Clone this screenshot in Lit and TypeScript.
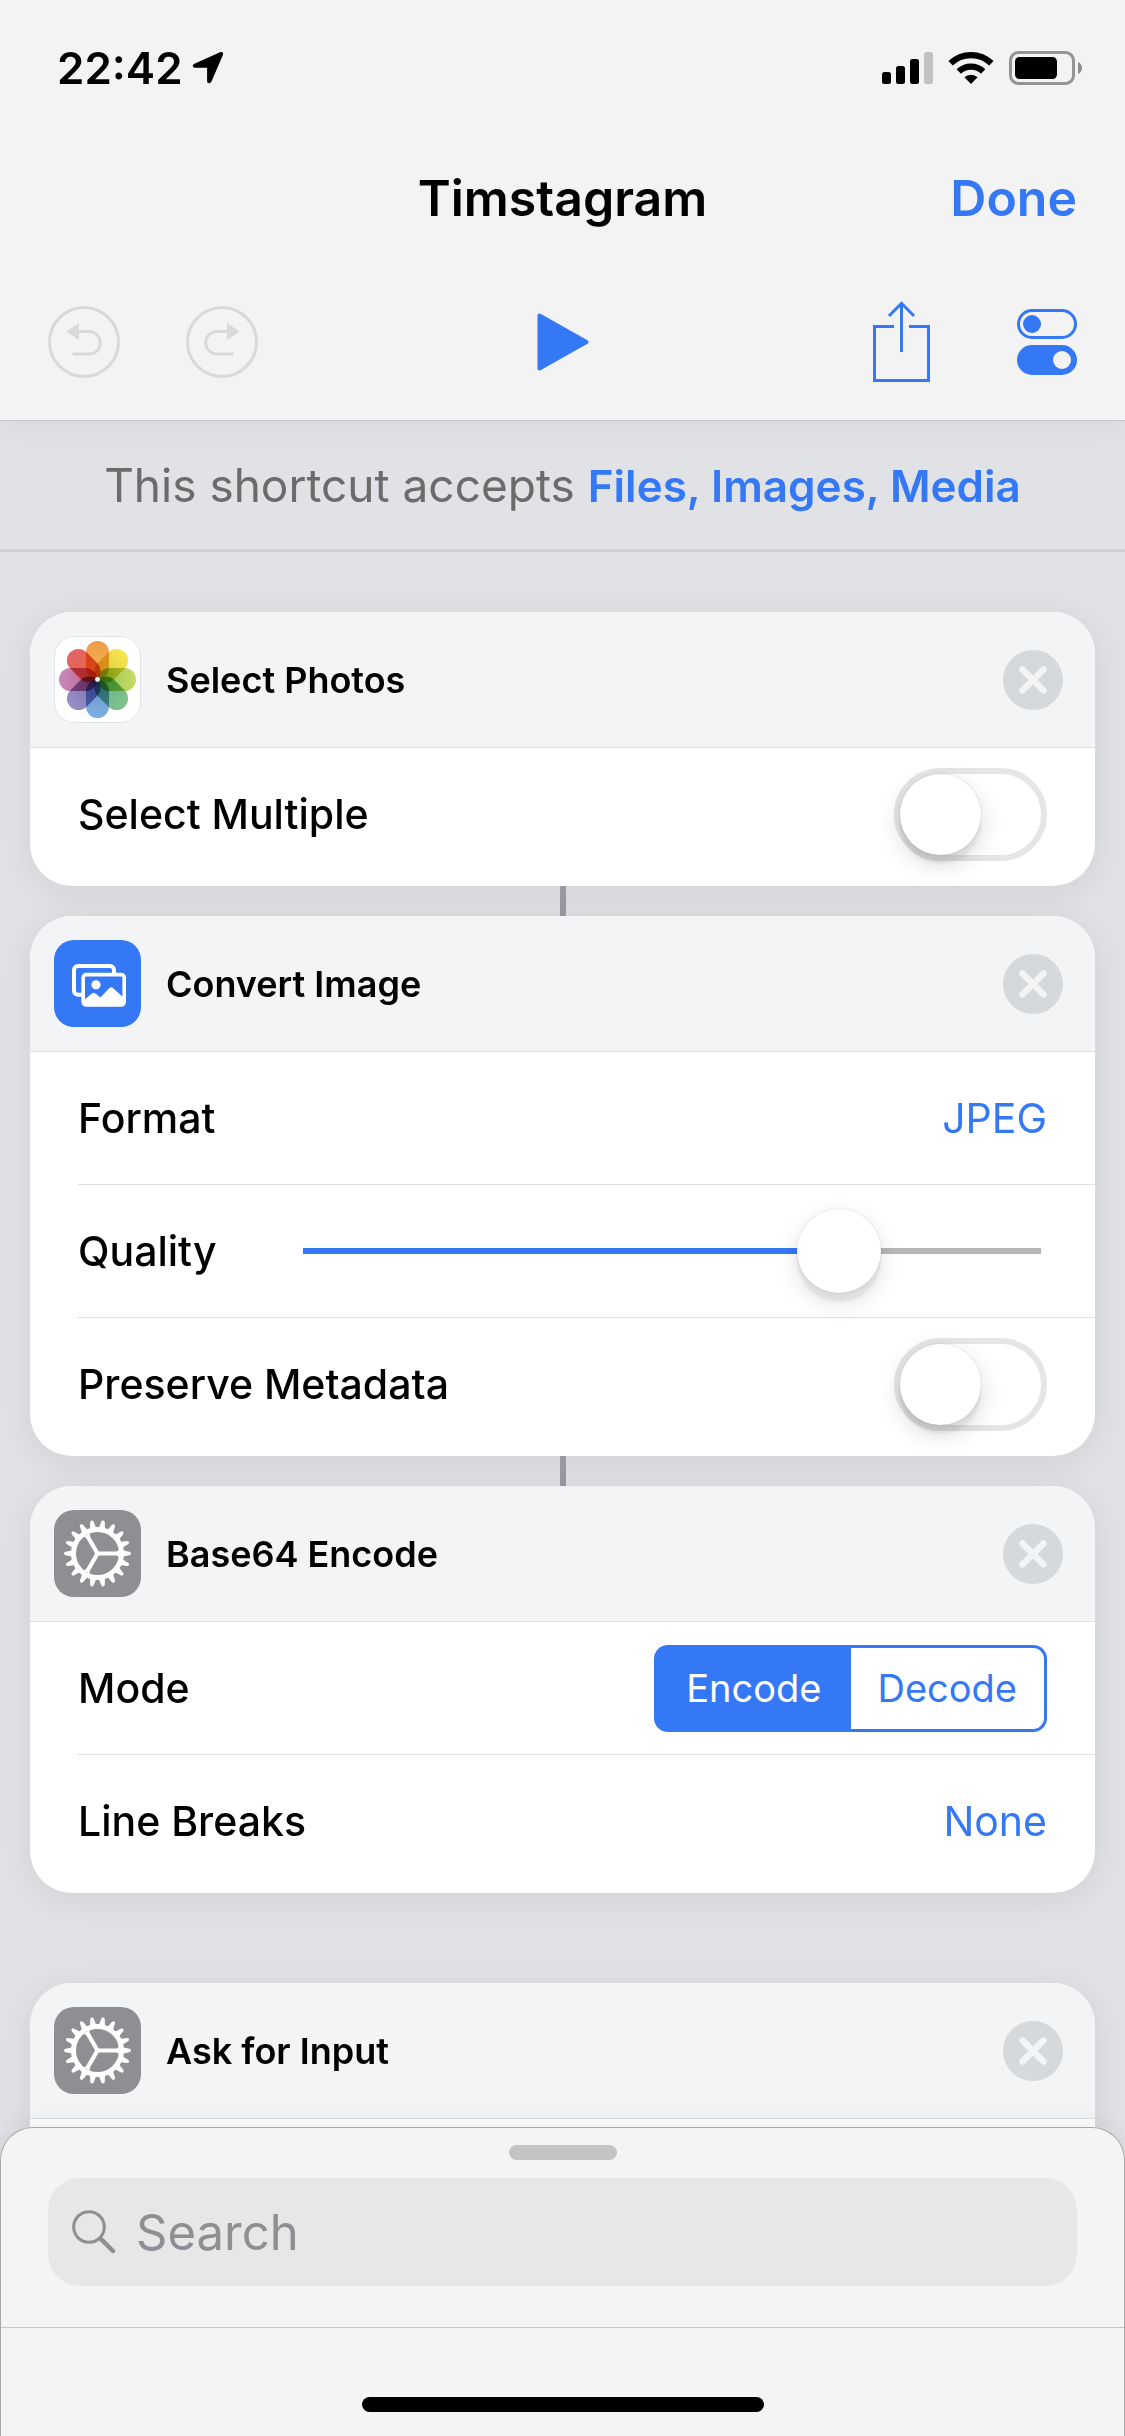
import { LitElement, html, css, svg, nothing, TemplateResult } from "lit";
import { customElement, property } from "lit/decorators.js";

const photosIcon = () => {
  const petals = [
    ["#ee9b4c", "#f2bd52"],
    ["#f9e64c", "#d3c545"],
    ["#c9db62", "#8fc455"],
    ["#80c389", "#66b096"],
    ["#7cb1e0", "#6c93c8"],
    ["#9890c6", "#8270b2"],
    ["#c68bbb", "#c25f86"],
    ["#e2646a", "#e8653c"],
  ];
  return html`<svg class="art" viewBox="0 0 87 87" aria-hidden="true">
    <defs>
      ${petals.map(
        ([outer, inner], i) => svg`<linearGradient id="petal${i}" x1="0" y1="0" x2="0" y2="1">
          <stop offset="0" stop-color=${outer} /><stop offset="1" stop-color=${inner} />
        </linearGradient>`
      )}
    </defs>
    <rect x="0.5" y="0.5" width="86" height="86" rx="20" fill="#fff" stroke="#e2e3e5" />
    ${petals.map(
      (_, i) => svg`<rect class="petal" x="32" y="5" width="23" height="38" rx="11.5"
        fill="url(#petal${i})" transform="rotate(${i * 45} 43.5 43.5)" />`
    )}
    <circle cx="43.5" cy="43.5" r="2.4" fill="#fff" />
  </svg>`;
};

const imageIcon = () => html`<svg class="art" viewBox="0 0 87 87" aria-hidden="true">
  <rect width="87" height="87" rx="20" fill="#3478f6" />
  <path d="M29 54.7H24a4 4 0 0 1-4-4V30a4 4 0 0 1 4-4h32a4 4 0 0 1 4 4v4" fill="none" stroke="#fff" stroke-width="4" />
  <rect x="29.2" y="34.6" width="41" height="30.4" rx="3" fill="#3478f6" stroke="#fff" stroke-width="3.6" />
  <circle cx="42" cy="44.8" r="4.6" fill="#fff" />
  <path d="M30 60L38 53.4q1.800-1.400 3.400 0L46.400 57.400 55.500 48q1.700-1.500 3.400 0L69.500 57.500V65H30z" fill="#fff" />
</svg>`;

const gearIcon = () => html`<svg class="art" viewBox="0 0 87 87" aria-hidden="true">
  <rect width="87" height="87" rx="20" fill="#8e8e93" />
  ${Array.from(
    { length: 18 },
    (_, i) => svg`<path d="M67 40L75.300 41.700q1.700 .300 1.700 1.800t-1.700 1.800L67 47z" fill="#fff"
      transform="rotate(${i * 20} 43.5 43.5)" />`
  )}
  <circle cx="43.5" cy="43.5" r="24" fill="none" stroke="#fff" stroke-width="5" />
  ${[0, 120, 240].map(
    (a) => svg`<path d="M43.500 41.400H62q2.500 0 3-2.500V48q-.5-2.400-3-2.400H43.500z" fill="#fff"
      transform="rotate(${a} 43.5 43.5)" />`
  )}
</svg>`;

const icons: Record<string, () => TemplateResult> = {
  photos: photosIcon,
  image: imageIcon,
  gear: gearIcon,
};

@customElement("action-card")
class ActionCard extends LitElement {
  @property() heading = "";
  @property() icon = "gear";

  static styles = css`
    :host {
      display: block;
      border-radius: 42px;
      background: #fff;
      box-shadow: 0 6px 36px rgba(0, 0, 0, 0.08);
      padding-bottom: 6px;
    }
    .head {
      display: flex;
      align-items: center;
      gap: 25px;
      padding: 24px 32px 24px 24px;
      background: #f3f4f6;
      border-bottom: 1px solid #dfe0e2;
      border-radius: 42px 42px 0 0;
    }
    .art {
      display: block;
      width: 87px;
      height: 87px;
    }
    .petal {
      mix-blend-mode: multiply;
    }
    .title {
      flex: 1;
      margin: 0;
      font-size: 36px;
      line-height: 44px;
      font-weight: 600;
    }
    .close {
      appearance: none;
      border: 0;
      padding: 0;
      background: none;
      border-radius: 50%;
    }
    .close svg {
      display: block;
      width: 60px;
      height: 60px;
    }
  `;

  render() {
    return html`
      <header class="head">
        ${icons[this.icon]()}
        <h2 class="title">${this.heading}</h2>
        <button class="close" type="button" aria-label="Remove ${this.heading}">
          <svg viewBox="0 0 60 60" aria-hidden="true">
            <circle cx="30" cy="30" r="30" fill="#d5d9dc" />
            <path d="M19.500 19.500L40.500 40.500M40.500 19.500L19.500 40.500" stroke="#f3f4f6" stroke-width="6.500" stroke-linecap="round" />
          </svg>
        </button>
      </header>
      <slot></slot>
    `;
  }
}

@customElement("status-bar")
class StatusBar extends LitElement {
  static styles = css`
    :host {
      display: flex;
      align-items: center;
      justify-content: space-between;
      height: 136px;
      padding: 0 42px 0 57px;
    }
    .group {
      display: flex;
      align-items: center;
    }
    .time {
      font-size: 44px;
      line-height: 54px;
      font-weight: 600;
      margin-right: 9px;
    }
    .art {
      display: block;
    }
    .arrow {
      width: 32px;
      height: 34px;
    }
    .signal {
      width: 51px;
      height: 34px;
      margin-right: 15px;
    }
    .wifi {
      width: 46px;
      height: 34px;
      margin-right: 15px;
    }
    .battery {
      width: 74px;
      height: 34px;
    }
  `;

  render() {
    return html`
      <div class="group">
        <span class="time">22:42</span>
        <svg class="art arrow" viewBox="0 0 32 34" aria-hidden="true">
          <path d="M28 1.200q3.500-1 3 2.500L19.500 30.500q-1.300 2.300-3.200 1.600-1.200-.5-1.200-2.200V16.800H3Q.8 16.600.7 15q0-1.400 1.700-2.300z" fill="#000" />
        </svg>
      </div>
      <div class="group">
        <svg class="art signal" viewBox="0 0 51 34" aria-hidden="true">
          <rect x="0" y="21" width="9" height="12" rx="2.500" />
          <rect x="14" y="15" width="9" height="18" rx="2.500" />
          <rect x="28" y="8" width="9" height="25" rx="2.500" />
          <rect x="42" y="1" width="9" height="32" rx="2.500" fill="#c2c2c2" />
        </svg>
        <svg class="art wifi" viewBox="0 0 46 34" aria-hidden="true">
          <g fill="none" stroke="#000" stroke-width="6.200">
            <path d="M2.600 12.300a29.500 29.500 0 0 1 40.800 0" />
            <path d="M10.800 20.600a17.700 17.700 0 0 1 24.400 0" />
          </g>
          <path d="M16.400 26.300a9.800 9.800 0 0 1 13.200 0L23 33z" />
        </svg>
        <svg class="art battery" viewBox="0 0 74 34" aria-hidden="true">
          <rect x="1.500" y="1.500" width="63" height="31" rx="8" fill="none" stroke="#949494" stroke-width="3" />
          <rect x="6" y="6" width="42" height="22" rx="4.500" />
          <path d="M69 11q4 1.800 4 6t-4 6z" fill="#8c8c8c" />
        </svg>
      </div>
    `;
  }
}

@customElement("app-root")
class AppRoot extends LitElement {
  static styles = css`
    :host {
      --blue: #3478f6;
      display: flex;
      flex-direction: column;
      height: 100vh;
      overflow: hidden;
      background: #e1e2e6;
      color: #000;
      font-family: Inter, "Liberation Sans", sans-serif;
    }
    button,
    input,
    select {
      font: inherit;
      color: inherit;
      appearance: none;
      border: 0;
      padding: 0;
      margin: 0;
      background: none;
    }
    svg {
      display: block;
    }
    .top {
      position: relative;
      z-index: 1;
      background: #f3f3f3;
      border-bottom: 1px solid #c6c6c8;
      box-shadow: 0 4px 30px rgba(0, 0, 0, 0.05);
    }
    .nav,
    .tools {
      display: grid;
      grid-template-columns: 1fr auto 1fr;
      align-items: center;
      padding: 0 48px;
    }
    .nav {
      height: 124px;
      font-size: 50px;
      line-height: 60px;
    }
    .name {
      grid-column: 2;
      margin: 0;
      font-size: inherit;
      font-weight: 600;
    }
    .done {
      justify-self: end;
      color: var(--blue);
      font-weight: 600;
    }
    .tools {
      box-sizing: border-box;
      height: 160px;
      padding-top: 3px;
    }
    .side {
      display: flex;
      align-items: center;
      gap: 66px;
    }
    .side.end {
      justify-content: flex-end;
      gap: 87px;
    }
    .banner {
      margin: 0;
      padding: 34px 48px;
      border-bottom: 3px solid #cfd0d2;
      text-align: center;
      font-size: 46px;
      line-height: 60px;
      color: #6b6b6b;
    }
    .accepts {
      color: var(--blue);
      font-weight: 600;
      font-size: 44px;
      line-height: 44px;
      text-decoration: none;
    }
    .scroll {
      flex: 1;
      min-height: 0;
      overflow: hidden;
    }
    .flow {
      display: flex;
      flex-direction: column;
      padding: 60px 30px;
    }
    .link {
      align-self: center;
      width: 6px;
      height: 30px;
      background: #9899a1;
    }
    .space {
      height: 90px;
    }
    .row {
      display: flex;
      align-items: center;
      justify-content: space-between;
      height: 132px;
      margin-left: 48px;
      padding-right: 48px;
      font-size: 41px;
      line-height: 50px;
    }
    .row + .row {
      border-top: 1px solid #dfe0e2;
    }
    .label {
      font-weight: 500;
    }
    .value {
      color: var(--blue);
      text-align-last: right;
    }
    .switch {
      display: flex;
      box-sizing: border-box;
      width: 153px;
      height: 93px;
      border: 6px solid #e5e5e5;
      border-radius: 47px;
    }
    .switch::before {
      content: "";
      width: 81px;
      height: 81px;
      border-radius: 50%;
      background: #fff;
      box-shadow: 0 9px 24px rgba(0, 0, 0, 0.15), 0 9px 3px rgba(0, 0, 0, 0.06), 0 0 2px rgba(0, 0, 0, 0.16);
    }
    .switch:checked {
      justify-content: flex-end;
      border-color: #4cd964;
      background: #4cd964;
    }
    .slider {
      flex: 1;
      height: 84px;
      margin: 0 6px 0 86px;
      background: linear-gradient(var(--blue), var(--blue)) left center / 75% 6px no-repeat,
        linear-gradient(#b6b6b6, #b6b6b6) center / 100% 6px no-repeat;
    }
    .slider::-webkit-slider-thumb {
      appearance: none;
      width: 84px;
      height: 84px;
      border-radius: 50%;
      background: #fff;
      box-shadow: 0 9px 24px rgba(0, 0, 0, 0.13), 0 9px 3px rgba(0, 0, 0, 0.06), 0 0 2px rgba(0, 0, 0, 0.16);
    }
    .segments {
      display: grid;
      grid-template-columns: 1fr 1fr;
      box-sizing: border-box;
      width: 393px;
      height: 87px;
      margin: 0;
      padding: 3px;
      border: 0;
      border-radius: 14px;
      background: var(--blue);
    }
    .segment {
      position: relative;
      display: flex;
      align-items: center;
      justify-content: center;
      background: #fff;
      color: var(--blue);
      font-size: 38px;
      line-height: 46px;
    }
    .segment:first-child {
      border-radius: 11px 0 0 11px;
    }
    .segment:last-child {
      border-radius: 0 11px 11px 0;
    }
    .segment:has(:checked) {
      background: var(--blue);
      color: #fff;
    }
    .radio {
      position: absolute;
      inset: 0;
      opacity: 0;
    }
    .sheet {
      position: relative;
      z-index: 1;
      display: flex;
      flex-direction: column;
      align-items: center;
      background: #f4f4f4;
      border: 1px solid #a9a9ab;
      border-bottom: 0;
      border-radius: 33px 33px 0 0;
      box-shadow: 0 0 24px rgba(0, 0, 0, 0.1);
    }
    .grip {
      width: 108px;
      height: 15px;
      margin: 17px 0 18px;
      border-radius: 8px;
      background: #c4c4c4;
    }
    .field {
      align-self: stretch;
      display: flex;
      align-items: center;
      gap: 20px;
      height: 108px;
      margin: 0 47px 41px;
      padding: 0 24px;
      border-radius: 32px;
      background: #e7e7e7;
    }
    .query {
      flex: 1;
      min-width: 0;
      height: 72px;
      font-size: 49px;
    }
    .query::placeholder {
      color: #8e8e93;
      opacity: 1;
    }
    .dock {
      align-self: stretch;
      display: flex;
      justify-content: center;
      padding: 69px 0 24px;
      border-top: 1px solid #c4c4c6;
    }
    .home {
      width: 402px;
      height: 15px;
      border-radius: 8px;
      background: #000;
    }
  `;

  private toggle(id: string, label: string) {
    return html`<div class="row">
      <label class="label" for=${id}>${label}</label>
      <input class="switch" id=${id} type="checkbox" role="switch" />
    </div>`;
  }

  private picker(id: string, label: string, value: string) {
    return html`<div class="row">
      <label class="label" for=${id}>${label}</label>
      <select class="value" id=${id}><option>${value}</option></select>
    </div>`;
  }

  private segment(label: string, on: boolean) {
    return html`<label class="segment">
      <input class="radio" type="radio" name="mode" ?checked=${on} />${label}
    </label>`;
  }

  private turn(label: string, mirrored: boolean) {
    return html`<button type="button" disabled aria-label=${label}>
      <svg width="72" height="72" viewBox="0 0 72 72" aria-hidden="true">
        <circle cx="36" cy="36" r="34.500" fill="none" stroke="#d9d9d9" stroke-width="3" />
        <g transform=${mirrored ? "matrix(-1 0 0 1 72 0)" : nothing}>
          <path d="M31 25.500H41a11.300 11.300 0 0 1 0 22.600H24.500" fill="none" stroke="#d9d9d9" stroke-width="3" />
          <path d="M18.500 25.500L31 17v17z" fill="#d9d9d9" />
        </g>
      </svg>
    </button>`;
  }

  render() {
    return html`
      <header class="top">
        <status-bar></status-bar>
        <div class="nav">
          <h1 class="name">Timstagram</h1>
          <button class="done" type="button">Done</button>
        </div>
        <div class="tools">
          <div class="side">${this.turn("Undo", false)} ${this.turn("Redo", true)}</div>
          <button type="button" aria-label="Run">
            <svg width="52" height="58" viewBox="0 0 52 58" aria-hidden="true">
              <path d="M2.500 2.500L49.500 29 2.500 55.500z" fill="#3478f6" stroke="#3478f6" stroke-width="4" stroke-linejoin="round" />
            </svg>
          </button>
          <div class="side end">
            <button type="button" aria-label="Share">
              <svg width="57" height="81" viewBox="0 0 57 81" aria-hidden="true">
                <path d="M21 25.500H1.500v54h54v-54H36M28.500 51V2.500M16 15L28.500 2.300 41 15" fill="none" stroke="#3478f6" stroke-width="3" />
              </svg>
            </button>
            <button type="button" aria-label="Settings">
              <svg width="60" height="66" viewBox="0 0 60 66" aria-hidden="true">
                <rect x="1.500" y="1.500" width="57" height="27" rx="13.500" fill="none" stroke="#3478f6" stroke-width="3" />
                <circle cx="15" cy="15" r="9" fill="#3478f6" />
                <rect y="36" width="60" height="30" rx="15" fill="#3478f6" />
                <circle cx="45" cy="51" r="9" fill="#f3f3f3" />
              </svg>
            </button>
          </div>
        </div>
      </header>
      <main class="scroll">
        <p class="banner">This shortcut accepts <a class="accepts" href="#types">Files, Images, Media</a></p>
        <div class="flow">
          <action-card heading="Select Photos" icon="photos">
            ${this.toggle("multiple", "Select Multiple")}
          </action-card>
          <div class="link"></div>
          <action-card heading="Convert Image" icon="image">
            ${this.picker("format", "Format", "JPEG")}
            <div class="row">
              <label class="label" for="quality">Quality</label>
              <input class="slider" id="quality" type="range" min="0" max="1" step="0.005" value="0.755" />
            </div>
            ${this.toggle("metadata", "Preserve Metadata")}
          </action-card>
          <div class="link"></div>
          <action-card heading="Base64 Encode">
            <div class="row">
              <span class="label" id="mode">Mode</span>
              <fieldset class="segments" aria-labelledby="mode">
                ${this.segment("Encode", true)} ${this.segment("Decode", false)}
              </fieldset>
            </div>
            ${this.picker("breaks", "Line Breaks", "None")}
          </action-card>
          <div class="space"></div>
          <action-card heading="Ask for Input">
            <div class="row"></div>
          </action-card>
        </div>
      </main>
      <footer class="sheet">
        <div class="grip"></div>
        <label class="field">
          <svg width="44" height="44" viewBox="0 0 44 44" aria-hidden="true">
            <circle cx="17" cy="17" r="15.300" fill="none" stroke="#8e8e93" stroke-width="3" />
            <path d="M28.500 28.500L41 41" stroke="#8e8e93" stroke-width="4.500" stroke-linecap="round" />
          </svg>
          <input class="query" type="search" placeholder="Search" aria-label="Search" />
        </label>
        <div class="dock"><div class="home"></div></div>
      </footer>
    `;
  }
}
